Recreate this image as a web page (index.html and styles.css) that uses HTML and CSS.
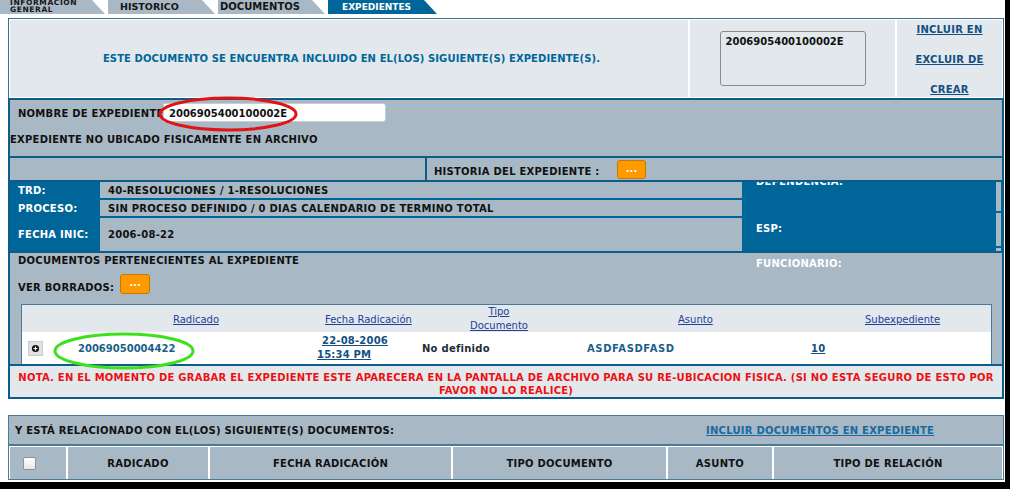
FILE: index.html
```html
<!DOCTYPE html>
<html lang="es">

<head>
  <meta charset="UTF-8">
  <meta name="viewport" content="width=device-width, initial-scale=1.0">
  <title>Expedientes</title>

  <link rel="stylesheet" href="styles.css">

</head>

<body>

  <div class="page">

    <div class="tabs">
      <div class="tab tab-info">INFORMACION<br>GENERAL</div>
      <div class="tab tab-hist">HISTORICO</div>
      <div class="tab tab-docs">DOCUMENTOS</div>
      <div class="tab tab-on">EXPEDIENTES</div>
    </div>

    <div class="exp">
      <div class="exp-head">
        <div class="head-msg">ESTE DOCUMENTO SE ENCUENTRA INCLUIDO EN EL(LOS) SIGUIENTE(S) EXPEDIENTE(S).</div>
        <div class="head-list">
          <div class="exp-list">2006905400100002E</div>
        </div>
        <div class="head-links">
          <a href="#">INCLUIR EN</a>
          <a href="#">EXCLUIR DE</a>
          <a href="#">CREAR</a>
        </div>
      </div>

      <div class="exp-body">
        <!-- nombre del expediente -->
        <div class="nombre">
          <div class="nombre-row">
            <span class="nombre-label">NOMBRE DE EXPEDIENTE</span>
            <div class="inp">2006905400100002E</div>
          </div>
          <div class="no-ubicado">EXPEDIENTE NO UBICADO FISICAMENTE EN ARCHIVO</div>
        </div>

        <div class="hist">
          <div class="cell"></div>
          <div class="cell hist-r"><span class="hist-label">HISTORIA DEL EXPEDIENTE :</span><span class="btn">...</span></div>
        </div>

        <!-- TRD / proceso / fecha -->
        <div class="trd">
          <div class="trd-l">TRD:</div>
          <div class="trd-v">40-RESOLUCIONES / 1-RESOLUCIONES</div>
          <div class="dep">
            <div class="dep-label">DEPENDENCIA:</div>
            <div class="esp">ESP:</div>
          </div>
          <div class="edge">
            <div class="e1"></div>
            <div class="e2"></div>
            <div class="e3"></div>
          </div>
          <div class="trd-l">PROCESO:</div>
          <div class="trd-v">SIN PROCESO DEFINIDO / 0 DIAS CALENDARIO DE TERMINO TOTAL</div>
          <div class="trd-l">FECHA INIC:</div>
          <div class="trd-v">2006-08-22</div>
        </div>

        <div class="docs">
          <div class="docs-top">
            <div class="docs-left">
              <div class="docs-title">DOCUMENTOS PERTENECIENTES AL EXPEDIENTE</div>
              <div class="borrados"><span class="borr-label">VER BORRADOS:</span><span class="btn btn-big">...</span></div>
            </div>
            <div class="funcionario">FUNCIONARIO:</div>
          </div>

          <div class="doc-table">
            <div class="doc-head">
              <div></div>
              <div><a href="#">Radicado</a></div>
              <div><a href="#">Fecha Radicación</a></div>
              <div><span class="two"><a href="#">Tipo</a><br><a href="#">Documento</a></span></div>
              <div><a href="#">Asunto</a></div>
              <div><a href="#">Subexpediente</a></div>
            </div>
            <div class="doc-row">
              <div class="plus-cell">
                <svg width="15" height="15" viewBox="0 0 15 15">
                  <rect x="0.5" y="0.5" width="14" height="14" fill="#dfe2e4" stroke="#c9ccce"/>
                  <circle cx="7.5" cy="7.5" r="3.6" fill="#111"/>
                  <path d="M7.5 5.5v4M5.5 7.5h4" stroke="#fff" stroke-width="1.2"/>
                </svg>
              </div>
              <div class="rad">20069050004422</div>
              <div class="fecha"><a href="#" class="f1">22-08-2006</a><br><a href="#">15:34 PM</a></div>
              <div class="tipo">No definido</div>
              <div class="rad asunto">ASDFASDFASD</div>
              <div><a href="#">10</a></div>
            </div>
          </div>
        </div>

        <div class="nota">NOTA. EN EL MOMENTO DE GRABAR EL EXPEDIENTE ESTE APARECERA EN LA PANTALLA DE ARCHIVO PARA SU RE-UBICACION FISICA. (SI NO ESTA SEGURO DE ESTO POR<br>FAVOR NO LO REALICE)</div>
      </div>
    </div>

    <div class="rel">
      <div class="rel-head">
        <span class="rel-title">Y ESTÁ RELACIONADO CON EL(LOS) SIGUIENTE(S) DOCUMENTOS:</span>
        <a href="#">INCLUIR DOCUMENTOS EN EXPEDIENTE</a>
      </div>
      <div class="rel-cols">
        <div class="chk-cell"><span class="chk"></span></div>
        <div>RADICADO</div>
        <div>FECHA RADICACIÓN</div>
        <div>TIPO DOCUMENTO</div>
        <div>ASUNTO</div>
        <div>TIPO DE RELACIÓN</div>
      </div>
    </div>

    <!-- marcas dibujadas a mano sobre la captura -->
    <svg class="mark mark-red" width="150" height="42">
      <ellipse cx="73" cy="20" rx="68" ry="16" fill="none" stroke="#e01414" stroke-width="3"/>
    </svg>
    <svg class="mark mark-green" width="150" height="42">
      <ellipse cx="74" cy="21" rx="69" ry="17" fill="none" stroke="#3ee01e" stroke-width="3"/>
    </svg>

  </div>

</body>

</html>
```

FILE: styles.css
```css
* {
  margin: 0;
  padding: 0;
  box-sizing: border-box;
}

body {
  background: #000;
  font-family: "DejaVu Sans", Verdana, sans-serif;
  font-size: 10px;
  font-weight: bold;
  letter-spacing: 0.25px;
  color: #111;
}

a {
  color: #144f83;
}

.page {
  position: relative;
  width: 1005px;
  height: 482px;
  background: #fff;
  overflow: hidden;
}

/* pestañas */
.tabs {
  display: flex;
  height: 14px;
}

.tab {
  width: 107px;
  margin-right: 3px;
  background: #a8b8c4;
  clip-path: polygon(0 0, calc(100% - 13px) 0, 100% 100%, 0 100%);
  line-height: 14px;
  letter-spacing: 0;
  color: #151515;
}

.tab-info {
  width: 105px;
  padding-left: 10px;
  font-size: 7.5px;
  line-height: 6.5px;
  letter-spacing: 0.6px;
}

.tab-hist {
  padding-left: 12px;
  font-size: 9.5px;
}

.tab-docs {
  padding-left: 2px;
}

.tab-on {
  width: 109px;
  padding-left: 14px;
  font-size: 9px;
  background: #006699;
  color: #fff;
}

/* caja de expedientes */
.exp {
  width: 996px;
  margin: 4px 0 0 8px;
}

.exp-head {
  display: grid;
  grid-template-columns: 678px 205px 1fr;
  gap: 2px;
  height: 80px;
  padding: 1px;
  background: #fff;
  border: 1px solid #3b6e8c;
  border-bottom: none;
}

.exp-head > div {
  background: #e3e8ec;
}

.head-msg {
  display: flex;
  align-items: center;
  justify-content: center;
  padding-left: 5px;
  letter-spacing: 0.1px;
  color: #006699;
}

.head-list {
  display: flex;
  align-items: center;
  justify-content: center;
}

.exp-list {
  width: 146px;
  height: 55px;
  padding: 4px 5px;
  line-height: 12px;
  letter-spacing: 0;
  border: 1px solid #8a8a8a;
  border-radius: 3px;
}

.head-links {
  display: flex;
  flex-direction: column;
  justify-content: space-between;
  align-items: center;
  padding: 4px 0 1px;
  line-height: 12px;
}

.exp-body {
  display: flex;
  flex-direction: column;
  gap: 2px;
  background: #0d5d88;
  border: 2px solid #0d5d88;
}

.nombre {
  height: 56px;
  background: #a8b8c4;
}

.nombre-row {
  display: flex;
  align-items: flex-start;
  padding: 3px 0 0 8px;
}

.nombre-label {
  flex: none;
  width: 145px;
  padding-top: 5px;
  line-height: 12px;
  white-space: nowrap;
}

.inp {
  width: 223px;
  height: 19px;
  padding: 2px 0 0 5px;
  line-height: 15px;
  letter-spacing: 0;
  background: #fff;
  border: 1px solid #c8cdd0;
  border-radius: 0 3px 3px 0;
}

.no-ubicado {
  margin-top: 12px;
  line-height: 12px;
}

.hist {
  display: grid;
  grid-template-columns: 415px 1fr;
  gap: 2px;
  height: 22px;
}

.cell {
  background: #a8b8c4;
}

.hist-r {
  display: flex;
  align-items: center;
  padding-left: 7px;
}

.hist-label {
  display: inline-block;
  width: 183px;
  padding-top: 4px;
}

.btn {
  display: inline-block;
  width: 29px;
  height: 19px;
  line-height: 15px;
  text-align: center;
  letter-spacing: 0;
  color: #fff;
  background: #ff9900;
  border: 1px solid #c47a00;
  border-radius: 3px;
}

.btn-big {
  width: 30px;
  height: 20px;
  line-height: 16px;
}

/* trd */
.trd {
  display: grid;
  grid-template-columns: 88px 642px 250px 1fr;
  grid-template-rows: 16px 16px 33px;
  gap: 2px;
  background: #006699;
}

.trd-l {
  display: flex;
  align-items: center;
  padding-left: 8px;
  color: #fff;
}

.trd-v {
  display: flex;
  align-items: center;
  padding-left: 8px;
  background: #a8b8c4;
}

.dep {
  grid-row: 1 / 4;
  grid-column: 3;
  padding-left: 12px;
  overflow: hidden;
  color: #fff;
  line-height: 12px;
}

.dep-label {
  margin-top: -6px;
}

.esp {
  margin-top: 35px;
}

.edge {
  grid-row: 1 / 4;
  grid-column: 4;
  display: flex;
  flex-direction: column;
  gap: 2px;
  padding-right: 1px;
}

.edge div {
  background: #a8b8c4;
}

.e1 { height: 29px; }
.e2 { height: 33px; }
.e3 { flex: 1; }

/* documentos */
.docs {
  background: #a8b8c4;
}

.docs-top {
  display: flex;
  height: 51px;
}

.docs-left {
  width: 746px;
  padding-left: 8px;
}

.docs-title {
  padding-top: 2px;
  line-height: 12px;
}

.borrados {
  display: flex;
  align-items: center;
  margin-top: 7px;
}

.borr-label {
  display: inline-block;
  width: 102px;
  padding-top: 6px;
}

.funcionario {
  padding-top: 5px;
  line-height: 12px;
  color: #fff;
}

.doc-table {
  margin: 0 10px 0 11px;
  border: 1px solid #4a7a94;
  border-bottom: none;
}

.doc-head {
  display: grid;
  grid-template-columns: 151px 152px 145px 208px 187px 1fr;
  align-items: center;
  height: 27px;
  background: #e3e8ec;
  font-weight: normal;
  letter-spacing: 0;
}

.doc-head a {
  color: #22409a;
}

.two {
  display: inline-block;
  text-align: center;
  line-height: 14px;
}

.doc-row {
  display: grid;
  grid-template-columns: 56px 239px 105px 165px 224px 1fr;
  align-items: center;
  height: 32px;
  background: #fff;
}

.plus-cell {
  display: flex;
  padding-left: 6px;
}

.rad {
  color: #1a5f8a;
  letter-spacing: 0;
}

.asunto {
  letter-spacing: 0.6px;
}

.fecha {
  line-height: 14px;
  letter-spacing: 0.2px;
}

.f1 {
  margin-left: 5px;
}

.tipo {
  color: #1c2c3a;
}

.nota {
  height: 31px;
  padding-top: 5px;
  line-height: 13px;
  text-align: center;
  letter-spacing: 0.24px;
  color: #ee1010;
  background: #e3e8ec;
}

/* relacionados */
.rel {
  width: 996px;
  margin: 16px 0 0 8px;
  border: 1px solid #4a7a94;
}

.rel-head {
  display: flex;
  align-items: center;
  height: 30px;
  padding-left: 6px;
  background: #a8b8c4;
  border-bottom: 2px solid #4a7a94;
}

.rel-title {
  width: 691px;
}

.rel-head a {
  color: #1a6a9e;
}

.rel-cols {
  display: grid;
  grid-template-columns: 56px 140px 241px 213px 104px 1fr;
  gap: 2px;
  padding: 1px 1px 0;
  background: #fff;
}

.rel-cols > div {
  display: flex;
  align-items: center;
  justify-content: center;
  height: 32px;
  background: #a8b8c4;
}

.rel-cols > .chk-cell {
  justify-content: flex-start;
  padding-left: 13px;
}

.chk {
  width: 13px;
  height: 13px;
  background: linear-gradient(#fff, #e6e6e6);
  border: 1px solid #8d9297;
  border-radius: 2px;
}

/* marcas */
.mark {
  position: absolute;
}

.mark-red {
  left: 155px;
  top: 94px;
}

.mark-green {
  left: 50px;
  top: 330px;
}
```
